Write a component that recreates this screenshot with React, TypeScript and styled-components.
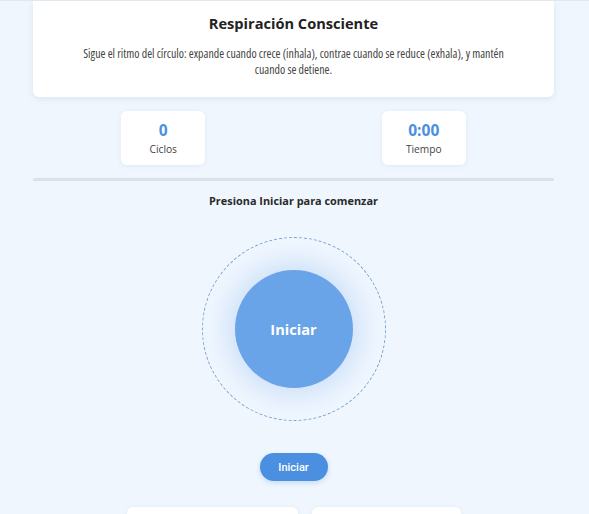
import React from "react";
import styled, { createGlobalStyle } from "styled-components";

const Global = createGlobalStyle`
  html, body { margin: 0; padding: 0; background: #eff6fe; }
  body { font-family: "Open Sans", "Noto Sans", sans-serif; color: #222; }
`;

const Page = styled.div`
  border-top: 1px solid #e3e8ee;
  min-height: 514px;
  box-sizing: border-box;
  overflow: hidden;
`;

const Container = styled.div`
  width: 521px;
  margin: 0 auto;
  padding-right: 2px;
  display: flex;
  flex-direction: column;
`;

const HeaderCard = styled.div`
  background: #fff;
  border-radius: 0 0 6px 6px;
  box-shadow: 0 2px 6px rgba(60, 90, 130, 0.1);
  padding: 10px 45px 20px;
  text-align: center;
`;

const Title = styled.h1`
  margin: 0 0 10px;
  font-size: 14.6px;
  font-weight: 700;
  color: #222;
  line-height: 24px;
`;

const Desc = styled.p`
  margin: 0;
  font-size: 11.9px;
  font-stretch: 75%;
  line-height: 16px;
  color: #444;
`;

const Stats = styled.div`
  display: flex;
  justify-content: space-around;
  margin-top: 14px;
`;

const StatCard = styled.div`
  width: 84px;
  height: 54px;
  background: #fff;
  border-radius: 6px;
  box-shadow: 0 1px 5px rgba(60, 90, 130, 0.08);
  display: flex;
  flex-direction: column;
  align-items: center;
  justify-content: center;
`;

const StatValue = styled.div`
  font-size: 15.5px;
  font-weight: 700;
  color: #4a8fe0;
  line-height: 20px;
`;

const StatLabel = styled.div`
  font-size: 10.2px;
  color: #444;
  line-height: 16px;
  margin-top: 1px;
`;

const Divider = styled.hr`
  border: none;
  height: 3px;
  background: #dde0e4;
  margin: 13px 0 0;
  border-radius: 2px;
`;

const Status = styled.div`
  margin-top: 12px;
  text-align: center;
  font-size: 10.9px;
  font-weight: 700;
  color: #2a2a2a;
  line-height: 16px;
`;

const BreathArea = styled.div`
  margin-top: 28px;
  display: flex;
  justify-content: center;
`;

const Ring = styled.div`
  width: 184px;
  height: 184px;
  box-sizing: border-box;
  border: 1px dashed #7aa3cf;
  border-radius: 50%;
  display: flex;
  align-items: center;
  justify-content: center;
`;

const Bubble = styled.div`
  width: 118px;
  height: 118px;
  border-radius: 50%;
  background: #69a3e8;
  box-shadow: 0 0 24px 8px rgba(120, 170, 235, 0.28);
  display: flex;
  align-items: center;
  justify-content: center;
  color: #fff;
  font-size: 14.6px;
  font-weight: 700;
`;

const Controls = styled.div`
  margin-top: 32px;
  display: flex;
  justify-content: center;
`;

const StartButton = styled.button`
  width: 68px;
  height: 28px;
  border: none;
  border-radius: 14px;
  background: #4a8fe0;
  color: #fff;
  font-family: Roboto, "Noto Sans", sans-serif;
  font-size: 11px;
  font-weight: 500;
  box-shadow: 0 2px 5px rgba(74, 143, 224, 0.25);
  cursor: pointer;
`;

const Bottom = styled.div`
  margin-top: 26px;
  display: flex;
  justify-content: center;
  gap: 14px;
`;

const BottomCard = styled.div<{ $w: number }>`
  width: ${(p) => p.$w}px;
  height: 60px;
  background: #fff;
  border-radius: 6px;
  box-shadow: 0 1px 5px rgba(60, 90, 130, 0.08);
`;

export default function App() {
  return (
    <Page>
      <Global />
      <Container>
        <HeaderCard>
          <Title>Respiración Consciente</Title>
          <Desc>
            Sigue el ritmo del círculo: expande cuando crece (inhala), contrae cuando se reduce
            (exhala), y mantén cuando se detiene.
          </Desc>
        </HeaderCard>
        <Stats>
          <StatCard>
            <StatValue>0</StatValue>
            <StatLabel>Ciclos</StatLabel>
          </StatCard>
          <StatCard>
            <StatValue>0:00</StatValue>
            <StatLabel>Tiempo</StatLabel>
          </StatCard>
        </Stats>
        <Divider />
        <Status>Presiona Iniciar para comenzar</Status>
        <BreathArea>
          <Ring>
            <Bubble>Iniciar</Bubble>
          </Ring>
        </BreathArea>
        <Controls>
          <StartButton>Iniciar</StartButton>
        </Controls>
        <Bottom>
          <BottomCard $w={171} />
          <BottomCard $w={149} />
        </Bottom>
      </Container>
    </Page>
  );
}
